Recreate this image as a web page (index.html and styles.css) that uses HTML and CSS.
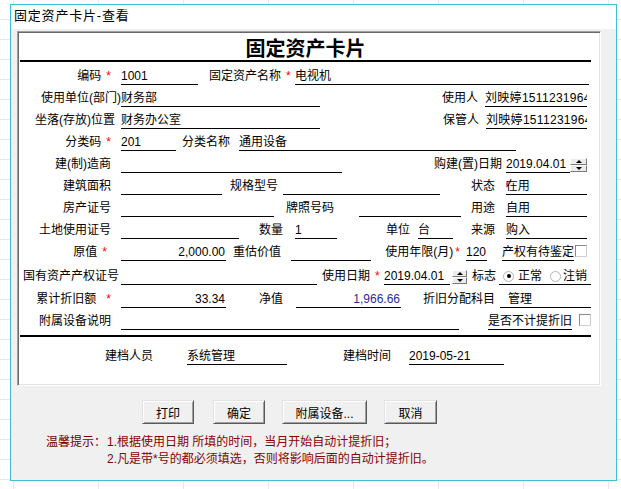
FILE: index.html
```html
<!DOCTYPE html>
<html lang="zh-CN">
<head>
<meta charset="utf-8">
<title>固定资产卡片-查看</title>
<link rel="stylesheet" href="styles.css">
</head>
<body>
<div class="window">
  <div class="titlebar">固定资产卡片-查看</div>
  <div class="client">
    <div class="panel">
      <div class="sheet">
        <div class="sheet-title">固定资产卡片</div>

        <div class="row first">
          <div class="lbl r w91">编码<span class="req">*</span></div>
          <div class="fld ml10 w77">1001</div>
          <div class="lbl w97 pl11">固定资产名称<span class="req">*</span></div>
          <div class="fld w294">电视机</div>
        </div>

        <div class="row">
          <div class="lbl r w101">使用单位(部门)</div>
          <div class="fld w199">财务部</div>
          <div class="lbl r w158">使用人</div>
          <div class="fld ml7 w102 clip">刘映婷1511231964</div>
        </div>

        <div class="row">
          <div class="lbl r w95">坐落(存放)位置</div>
          <div class="fld ml6 w199">财务办公室</div>
          <div class="lbl r w159">保管人</div>
          <div class="fld ml7 w101 clip">刘映婷1511231964</div>
        </div>

        <div class="row">
          <div class="lbl r w91">分类码<span class="req">*</span></div>
          <div class="fld ml10 w55">201</div>
          <div class="lbl ml6 w48">分类名称</div>
          <div class="fld ml9 w277">通用设备</div>
        </div>

        <div class="row">
          <div class="lbl r w91">建(制)造商</div>
          <div class="fld ml10 w221"></div>
          <div class="lbl r w160">购建(置)日期</div>
          <div class="fld ml4 w64">2019.04.01</div>
          <div class="spin w17"><span class="up"></span><span class="dn"></span></div>
        </div>

        <div class="row">
          <div class="lbl r w91">建筑面积</div>
          <div class="fld ml10 w101"></div>
          <div class="lbl ml8 w48">规格型号</div>
          <div class="fld ml5 w157"></div>
          <div class="lbl r w55">状态</div>
          <div class="fld ml11 w81"><span class="req tuck">*</span>在用</div>
        </div>

        <div class="row">
          <div class="lbl r w91">房产证号</div>
          <div class="fld ml10 w153"></div>
          <div class="lbl ml12 w48">牌照号码</div>
          <div class="fld ml25 w102"></div>
          <div class="lbl r w34">用途</div>
          <div class="fld ml11 w81">自用</div>
        </div>

        <div class="row">
          <div class="lbl r w91">土地使用证号</div>
          <div class="fld ml10 w118"></div>
          <div class="lbl r w44">数量</div>
          <div class="fld ml12 w42">1</div>
          <div class="lbl r w73">单位</div>
          <div class="fld ml8 w35">台</div>
          <div class="lbl r w42">来源</div>
          <div class="fld ml11 w81">购入</div>
        </div>

        <div class="row">
          <div class="lbl r w91 pr4">原值<span class="req">*</span></div>
          <div class="fld ml10 w105 num">2,000.00</div>
          <div class="lbl ml7 w48">重估价值</div>
          <div class="fld ml10 w80"></div>
          <div class="lbl r w89">使用年限(月)<span class="req tight">*</span></div>
          <div class="fld ml6 w21">120</div>
          <div class="fld ml15">产权有待鉴定</div>
          <div class="chk ml1"></div>
        </div>

        <div class="row r10">
          <div class="lbl r w99">国有资产产权证号</div>
          <div class="fld ml2 w196"></div>
          <div class="lbl ml5 w58">使用日期<span class="req">*</span></div>
          <div class="fld ml4 w66">2019.04.01</div>
          <div class="spin ml2 w15"><span class="up"></span><span class="dn"></span></div>
          <div class="lbl ml5">标志</div>
          <div class="fld ml3 w92 radios">
            <span class="radio on ml4"></span><span class="opt ml4">正常</span>
            <span class="radio ml8"></span><span class="opt ml2">注销</span>
          </div>
        </div>

        <div class="row r11">
          <div class="lbl r w91">累计折旧额<span class="req far">*</span></div>
          <div class="fld ml10 w105 num">33.34</div>
          <div class="lbl r w57">净值</div>
          <div class="fld ml13 w105 num blue">1,966.66</div>
          <div class="lbl ml22 w72">折旧分配科目</div>
          <div class="fld ml5 w91 pl8">管理</div>
        </div>

        <div class="row">
          <div class="lbl r w91">附属设备说明</div>
          <div class="fld ml10 w338"></div>
          <div class="fld ml29">是否不计提折旧</div>
          <div class="chk ml7"></div>
        </div>

        <div class="sep"></div>

        <div class="row foot">
          <div class="lbl ml85 w48">建档人员</div>
          <div class="fld ml34 w100">系统管理</div>
          <div class="lbl ml56 w48">建档时间</div>
          <div class="fld ml18 w95">2019-05-21</div>
        </div>
      </div>
    </div>

    <div class="buttons">
      <button class="btn w52" type="button">打印</button>
      <button class="btn ml19 w52" type="button">确定</button>
      <button class="btn ml17 w85" type="button">附属设备...</button>
      <button class="btn ml17 w53" type="button">取消</button>
    </div>

    <div class="tips">
      <div class="tips-head">温馨提示：</div>
      <div class="tips-body">
        <div>1.根据使用日期 所填的时间，当月开始自动计提折旧；</div>
        <div>2.凡是带*号的都必须填选，否则将影响后面的自动计提折旧。</div>
      </div>
    </div>
  </div>
</div>
</body>
</html>
```

FILE: styles.css
```css
* { box-sizing: border-box; }

html, body { height: 100%; }

body {
  margin: 0;
  padding: 4px 0 0 10px;
  background-color: #fff;
  background-image:
    linear-gradient(#e8e8e8 1px, transparent 1px),
    linear-gradient(90deg, #e8e8e8 1px, transparent 1px);
  background-size: 100% 20px, 85px 100%;
  background-position: 0 19px, 13px 0;
  font: 12px "Liberation Sans", "Noto Sans CJK SC", sans-serif;
  color: #000;
}

.window {
  width: 607px;
  height: 477px;
  border: 1px solid #3fbfd2;
  background: #fff;
  display: flex;
  flex-direction: column;
}

.titlebar {
  height: 24px;
  line-height: 22px;
  padding-left: 3px;
  font-size: 13px;
  letter-spacing: 0.8px;
  background: #fff;
}

.client {
  flex: 1;
  background: #f0f0f0;
  padding: 2px 0 0 6px;
}

.panel {
  width: 584px;
  height: 355px;
  background: #fff;
  border: 1px solid;
  border-color: #a0a0a0 #fff #fff #a0a0a0;
  box-shadow: inset 1px 1px 0 #696969, inset -1px -1px 0 #e3e3e3;
  padding: 1px 0 0 2px;
}

.sheet { width: 571px; }

.sheet-title {
  height: 29px;
  line-height: 27px;
  border-bottom: 2px solid #000;
  text-align: center;
  font: 700 20px "Noto Sans CJK SC", sans-serif;
}

.row {
  display: flex;
  height: 22px;
}
.row.first { margin-top: 3px; }
.row.r10 { margin-top: 2px; }
.row.r11 { margin-top: 1px; }
.row.foot { margin-top: 8px; }

.lbl {
  flex: none;
  margin-top: 3px;
  line-height: 16px;
  white-space: nowrap;
}
.r { text-align: right; }

.fld {
  flex: none;
  margin-top: 3px;
  height: 17px;
  line-height: 16px;
  border-bottom: 1px solid #000;
  white-space: nowrap;
  overflow: hidden;
}
.clip { letter-spacing: 0.3px; }
.num { text-align: right; padding-right: 1px; }
.blue { color: #2b2b9e; }

.req { color: #f00; margin-left: 5px; }
.req.tight { margin-left: 2px; }
.req.far { margin-left: 10px; }
.req.tuck { margin-left: -1px; margin-right: -4px; }

.chk {
  flex: none;
  width: 12px;
  height: 12px;
  margin-top: 4px;
  background: #fff;
  border: 1px solid;
  border-color: #8a8a8a #cfcfcf #cfcfcf #8a8a8a;
}

.spin {
  flex: none;
  display: flex;
  flex-direction: column;
  margin-top: 5px;
  height: 14px;
}
.spin span {
  flex: 1;
  display: flex;
  align-items: center;
  justify-content: center;
  background: #ececec;
  border: 1px solid;
  border-color: #fff #7a7a7a #7a7a7a #fff;
}
.spin span::after {
  content: "";
  border-left: 3px solid transparent;
  border-right: 3px solid transparent;
}
.spin .up::after { border-bottom: 3px solid #000; }
.spin .dn::after { border-top: 3px solid #000; }

.radios {
  display: flex;
  align-items: center;
}
.radio {
  flex: none;
  width: 11px;
  height: 11px;
  border: 1px solid #b4b4b4;
  border-radius: 50%;
  background: #fff;
  display: flex;
  align-items: center;
  justify-content: center;
}
.radio.on::after {
  content: "";
  width: 4px;
  height: 4px;
  border-radius: 50%;
  background: #000;
}
.opt { flex: none; }

.sep {
  margin-top: 3px;
  height: 2px;
  background: #000;
}

.buttons {
  display: flex;
  margin: 14px 0 0 125px;
}
.btn {
  flex: none;
  height: 24px;
  padding: 0;
  font: 12px "Liberation Sans", "Noto Sans CJK SC", sans-serif;
  color: #000;
  background: #f0f0f0;
  border: 1px solid;
  border-color: #e3e3e3 #5a5a5a #5a5a5a #e3e3e3;
  box-shadow: inset 1px 1px 0 #fff, inset -1px -1px 0 #a0a0a0;
}

.tips {
  display: flex;
  margin: 10px 0 0 29px;
  line-height: 17px;
}
.tips-head { flex: none; width: 61px; color: #6e0000; }
.tips-body { color: #880000; }

/* widths */
.w15 { width: 15px; } .w17 { width: 17px; } .w21 { width: 21px; }
.w34 { width: 34px; } .w35 { width: 35px; } .w42 { width: 42px; }
.w44 { width: 44px; } .w48 { width: 48px; } .w52 { width: 52px; }
.w53 { width: 53px; } .w55 { width: 55px; } .w57 { width: 57px; }
.w58 { width: 58px; } .w64 { width: 64px; } .w66 { width: 66px; }
.w72 { width: 72px; } .w73 { width: 73px; } .w77 { width: 77px; }
.w80 { width: 80px; } .w81 { width: 81px; } .w85 { width: 85px; }
.w89 { width: 89px; } .w91 { width: 91px; } .w92 { width: 92px; }
.w95 { width: 95px; } .w97 { width: 97px; } .w99 { width: 99px; }
.w100 { width: 100px; } .w101 { width: 101px; } .w102 { width: 102px; }
.w105 { width: 105px; } .w118 { width: 118px; } .w153 { width: 153px; }
.w157 { width: 157px; } .w158 { width: 158px; } .w159 { width: 159px; }
.w160 { width: 160px; } .w196 { width: 196px; } .w199 { width: 199px; }
.w221 { width: 221px; } .w277 { width: 277px; } .w294 { width: 294px; }
.w338 { width: 338px; }

/* left margins */
.ml1 { margin-left: 1px; } .ml2 { margin-left: 2px; } .ml3 { margin-left: 3px; }
.ml4 { margin-left: 4px; } .ml5 { margin-left: 5px; } .ml6 { margin-left: 6px; }
.ml7 { margin-left: 7px; } .ml8 { margin-left: 8px; } .ml9 { margin-left: 9px; }
.ml10 { margin-left: 10px; } .ml11 { margin-left: 11px; } .ml12 { margin-left: 12px; }
.ml13 { margin-left: 13px; } .ml15 { margin-left: 15px; } .ml17 { margin-left: 17px; }
.ml18 { margin-left: 18px; } .ml19 { margin-left: 19px; } .ml22 { margin-left: 22px; }
.ml25 { margin-left: 25px; } .ml29 { margin-left: 29px; } .ml34 { margin-left: 34px; }
.ml56 { margin-left: 56px; } .ml85 { margin-left: 85px; }

/* paddings */
.pl8 { padding-left: 8px; }
.pl11 { padding-left: 11px; }
.pr4 { padding-right: 4px; }
```
